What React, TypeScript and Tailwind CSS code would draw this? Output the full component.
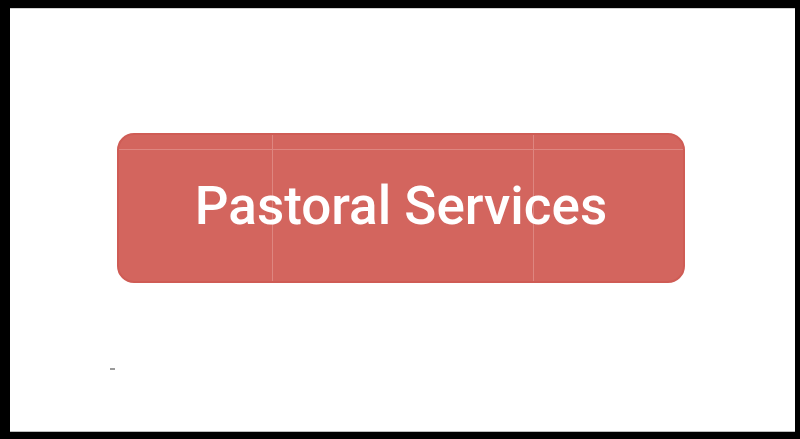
export default function App() {
  return (
    <div className="h-[439px] w-[800px] bg-black pt-[8px] pl-[10px] pr-[5px] pb-[7px]">
      <div className="relative h-full w-full border-t border-b border-t-[#d0d0d0] border-b-[#bdbdbd] bg-white">
        <div className="pl-[107px] pt-[124px]">
          <button
            type="button"
            className="relative flex h-[150px] w-[568px] items-center justify-center overflow-hidden rounded-[17px] border-2 border-[#cf5c55] bg-[#d3655e] font-['Roboto','Liberation_Sans',sans-serif] text-[53px] font-medium leading-none text-white"
          >
            {/* faint guide lines baked into the screenshot */}
            <span className="absolute left-0 right-0 top-[14px] h-px bg-[#de8680]" />
            <span className="absolute bottom-0 top-0 left-[153px] w-px bg-[#de8680]" />
            <span className="absolute bottom-0 top-0 left-[414px] w-px bg-[#de8680]" />
            <span className="relative -mt-[4px]">Pastoral Services</span>
          </button>
        </div>
        <span className="absolute left-[100px] top-[359px] h-[2px] w-[5px] bg-[#9a9a9a]" />
      </div>
    </div>
  )
}
